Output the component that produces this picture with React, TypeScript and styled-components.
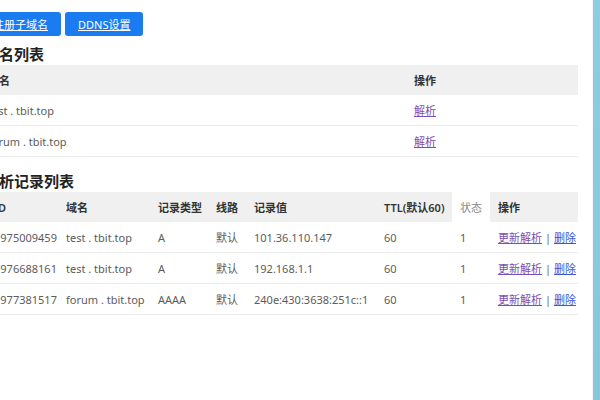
import React from 'react';
import styled, { createGlobalStyle } from 'styled-components';

const GlobalStyle = createGlobalStyle`
    html, body {
        margin: 0;
        padding: 0;
        overflow: hidden;
        background: #fff;
        font-family: "Noto Sans", "Noto Sans CJK SC", sans-serif;
    }
`;

const Screen = styled.div`
    display: flex;
    width: 600px;
    height: 400px;
`;

const Viewport = styled.div`
    flex: 1;
    overflow: hidden;
    background: #fff;
    border-right: 1px solid #f4f6f7;
`;

const SideStrip = styled.div`
    width: 7px;
    background: linear-gradient(180deg, #8ccddf 0%, #86c8da 100%);
`;

const Page = styled.div`
    margin-left: -20px;
    width: 598px;
    padding-top: 12px;
`;

const Toolbar = styled.div`
    display: flex;
    gap: 4px;
`;

const ActionButton = styled.a`
    display: inline-flex;
    align-items: center;
    height: 24px;
    padding: 0 13px;
    background: #1a7cf0;
    border-radius: 3px;
    color: #fff;
    font-size: 11px;
    text-decoration: underline;
    cursor: pointer;
`;

const SectionTitle = styled.h2<{ $top: number }>`
    margin: ${(p) => p.$top}px 0 0 4px;
    height: 21px;
    line-height: 21px;
    font-size: 15px;
    font-weight: 700;
    color: #222;
`;

const Table = styled.table<{ $leadPad?: number }>`
    width: 100%;
    table-layout: fixed;
    border-collapse: collapse;
    font-size: 11px;

    th:first-child,
    td:first-child {
        padding-left: ${(p) => p.$leadPad ?? 8}px;
    }
`;

const HeadCell = styled.th<{ $plain?: boolean }>`
    height: 30px;
    padding: 0 8px;
    text-align: left;
    font-weight: ${(p) => (p.$plain ? 400 : 600)};
    color: ${(p) => (p.$plain ? '#888' : '#333')};
    background: ${(p) => (p.$plain ? '#fff' : '#f0f0f0')};
    white-space: nowrap;
`;

const Cell = styled.td`
    height: 30px;
    padding: 0 8px;
    color: #5c5c5c;
    border-bottom: 1px solid #ebebeb;
    white-space: nowrap;
    overflow: hidden;
`;

const Link = styled.a<{ $tone?: 'visited' | 'fresh' }>`
    color: ${(p) => (p.$tone === 'fresh' ? '#3d57d8' : '#7a4fb0')};
    text-decoration: underline;
    cursor: pointer;
`;

const Sep = styled.span`
    color: #666;
    margin: 0 3px;
`;

const domains = ['test . tbit.top', 'forum . tbit.top'];

const records = [
    { id: '1975009459', name: 'test . tbit.top', type: 'A', line: '默认', value: '101.36.110.147', ttl: '60', status: '1' },
    { id: '1976688161', name: 'test . tbit.top', type: 'A', line: '默认', value: '192.168.1.1', ttl: '60', status: '1' },
    { id: '1977381517', name: 'forum . tbit.top', type: 'AAAA', line: '默认', value: '240e:430:3638:251c::1', ttl: '60', status: '1' },
];

const recordCols = [78, 92, 58, 38, 130, 76, 38, 88];

const App: React.FC = () => {
    return (
        <Screen>
            <GlobalStyle />
            <Viewport>
                <Page>
                    <Toolbar>
                        <ActionButton>注册子域名</ActionButton>
                        <ActionButton>DDNS设置</ActionButton>
                    </Toolbar>

                    <SectionTitle $top={8}>域名列表</SectionTitle>
                    <Table>
                        <colgroup>
                            <col style={{ width: 426 }} />
                            <col />
                        </colgroup>
                        <thead>
                            <tr>
                                <HeadCell>域名</HeadCell>
                                <HeadCell>操作</HeadCell>
                            </tr>
                        </thead>
                        <tbody>
                            {domains.map((d) => (
                                <tr key={d}>
                                    <Cell>{d}</Cell>
                                    <Cell>
                                        <Link $tone="visited">解析</Link>
                                    </Cell>
                                </tr>
                            ))}
                        </tbody>
                    </Table>

                    <SectionTitle $top={14}>解析记录列表</SectionTitle>
                    <Table $leadPad={14}>
                        <colgroup>
                            {recordCols.map((w, i) => (
                                <col key={i} style={{ width: w }} />
                            ))}
                        </colgroup>
                        <thead>
                            <tr>
                                <HeadCell>ID</HeadCell>
                                <HeadCell>域名</HeadCell>
                                <HeadCell>记录类型</HeadCell>
                                <HeadCell>线路</HeadCell>
                                <HeadCell>记录值</HeadCell>
                                <HeadCell>TTL(默认60)</HeadCell>
                                <HeadCell $plain>状态</HeadCell>
                                <HeadCell>操作</HeadCell>
                            </tr>
                        </thead>
                        <tbody>
                            {records.map((r) => (
                                <tr key={r.id}>
                                    <Cell>{r.id}</Cell>
                                    <Cell>{r.name}</Cell>
                                    <Cell>{r.type}</Cell>
                                    <Cell>{r.line}</Cell>
                                    <Cell>{r.value}</Cell>
                                    <Cell>{r.ttl}</Cell>
                                    <Cell>{r.status}</Cell>
                                    <Cell>
                                        <Link $tone="visited">更新解析</Link>
                                        <Sep>|</Sep>
                                        <Link $tone="fresh">删除</Link>
                                    </Cell>
                                </tr>
                            ))}
                        </tbody>
                    </Table>
                </Page>
            </Viewport>
            <SideStrip />
        </Screen>
    );
};

export default App;
